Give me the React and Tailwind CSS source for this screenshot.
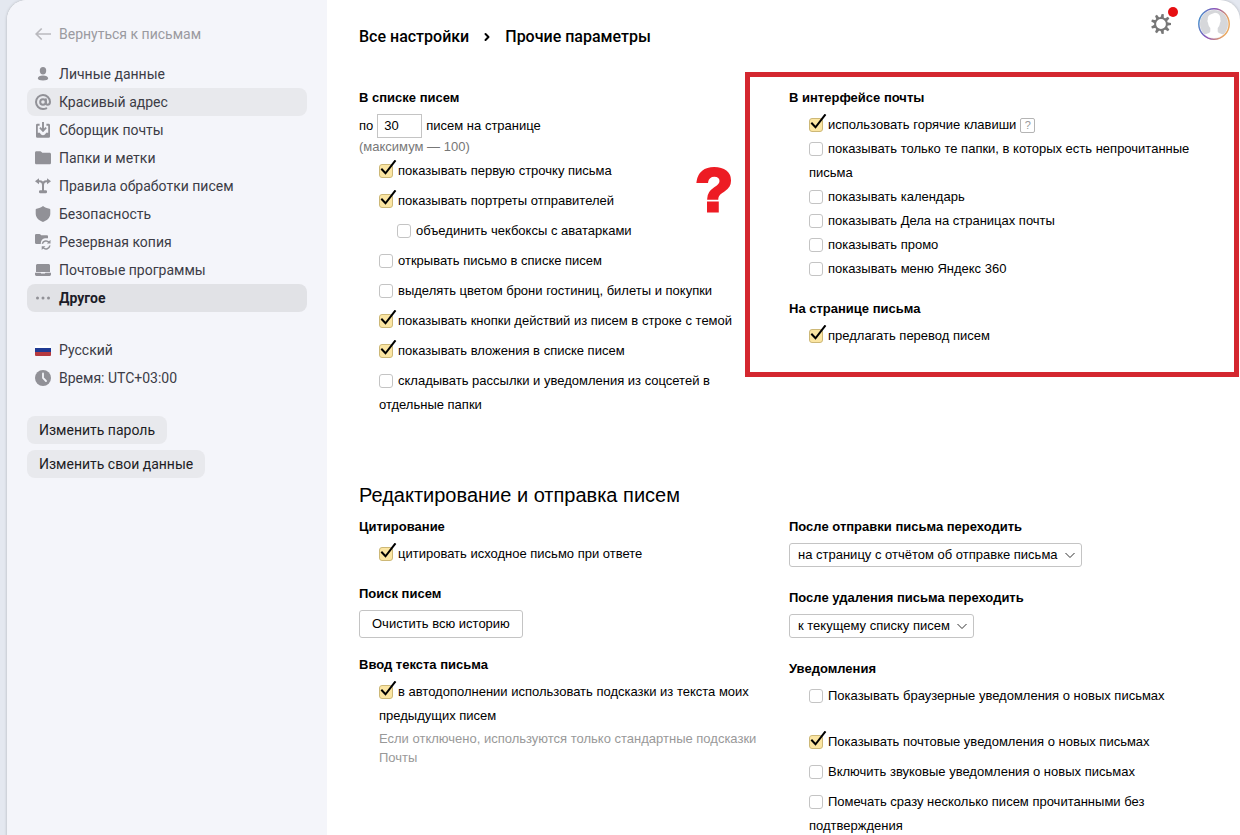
import { useState } from "react";
import { ChevronRight } from "lucide-react";

const BackIcon = () => (
  <svg viewBox="0 0 16 16" fill="none" stroke="#b9b9be" strokeWidth="1.7" className="size-4">
    <path d="M16 8H1.500M6.700 2.500 1.200 8l5.500 5.500" />
  </svg>
);

const PersonIcon = () => (
  <svg viewBox="0 0 16 16" fill="currentColor" className="size-4">
    <ellipse cx="8" cy="4.7" rx="3.2" ry="3.7" />
    <path d="M2.8 12.6C2.8 10.6 5 9.4 8 9.4s5.200 1.200 5.200 3.200c0 1.300-2.200 1.900-5.200 1.900s-5.200-.6-5.200-1.900z" />
  </svg>
);

const AtIcon = () => (
  <svg viewBox="0 0 16 16" fill="none" stroke="currentColor" strokeWidth="2" strokeLinecap="round" className="size-4">
    <circle cx="8" cy="8" r="2.800" />
    <path d="M10.900 5.200v3.600c0 1.200.7 1.900 1.700 1.900s2.400-.9 2.400-2.900A7 7 0 1 0 8 15c1.300 0 2.200-.2 3.200-.7" />
  </svg>
);

const CollectorIcon = () => (
  <svg viewBox="0 0 16 16" className="size-4">
    <path
      d="M4.600 1.800H2.400A1.400 1.400 0 0 0 1 3.200v11.200A1.400 1.400 0 0 0 2.400 15.800h11.200a1.400 1.400 0 0 0 1.400-1.400V3.200a1.400 1.400 0 0 0-1.400-1.400h-2.200v2h1.800v7h-2.200c-.4 1.500-1.500 2.400-3 2.400s-2.600-.9-3-2.400H2.800v-7h1.800z"
      fill="currentColor"
    />
    <path d="M8 0v8.500M4.900 5.700 8 8.800l3.100-3.100" fill="none" stroke="currentColor" strokeWidth="1.900" />
  </svg>
);

const FolderIcon = () => (
  <svg viewBox="0 0 16 16" fill="currentColor" className="size-4">
    <path d="M0 2.800C0 2 .6 1.300 1.300 1.300h4c.5 0 .9.2 1.200.6l.8.900h7.200c.8 0 1.500.6 1.500 1.400v8.700c0 .8-.7 1.400-1.500 1.400h-13C.7 14.300 0 13.700 0 12.900z" />
  </svg>
);

const RulesIcon = () => (
  <svg viewBox="0 0 16 16" fill="currentColor" className="size-4">
    <path d="M3 3.200h1.500C6.500 3.200 8 5 8 7.500 8 5 9.500 3.200 11.500 3.200H13M8 7v6" fill="none" stroke="currentColor" strokeWidth="2" />
    <path d="M4 .2v6L0 3.200zM12 .2v6l4-3z" />
    <rect x="4" y="12.200" width="8" height="3" rx="1.200" />
  </svg>
);

const ShieldIcon = () => (
  <svg viewBox="0 0 16 16" fill="currentColor" className="size-4">
    <path d="M8 0c1.800 1.400 4 2.300 6.400 2.700.6.100.9.500.9 1.100v3.700c0 4-3 7-7.300 8.500C3.700 14.500.7 11.500.7 7.500V3.800c0-.6.3-1 .9-1.100C4 2.300 6.200 1.400 8 0z" />
  </svg>
);

const BackupIcon = () => (
  <svg viewBox="0 0 16 16" className="size-4">
    <path
      d="M0 1.300C0 .6.500 0 1.200 0h3.200c.5 0 .8.200 1.100.5l.7.800h5.600c.700 0 1.200.5 1.200 1.200v1.700H10c-2.500.4-4 2-4.200 4.700v1H1.200C.5 9.900 0 9.400 0 8.700z"
      fill="currentColor"
    />
    <path d="M7.300 9.700A4 4 0 0 1 14 8.200M14.900 11.500a4 4 0 0 1-6.700 2.300" fill="none" stroke="currentColor" strokeWidth="1.500" />
    <path d="M15.500 5.800v3.700h-3.700zM6.700 15.900v-3.700h3.700z" fill="currentColor" />
  </svg>
);

const LaptopIcon = () => (
  <svg viewBox="0 0 16 16" fill="currentColor" className="size-4">
    <path d="M1 3.500C1 2.700 1.700 2 2.500 2h11c.8 0 1.500.7 1.500 1.500V9.900H1zM0 10.700h5.600c.3.600.6.900 1.200.9h2.400c.6 0 .9-.3 1.200-.9H16v1.900c0 .8-.6 1.400-1.400 1.400H1.400C.6 14 0 13.400 0 12.600z" />
  </svg>
);

const DotsIcon = () => (
  <svg viewBox="0 0 16 16" fill="currentColor" className="size-4">
    <circle cx="2.500" cy="8" r="1.500" />
    <circle cx="8" cy="8" r="1.500" />
    <circle cx="13.500" cy="8" r="1.500" />
  </svg>
);

const FlagIcon = () => (
  <svg viewBox="0 0 16 16" className="size-4">
    <path d="M0 3h16v3H0z" fill="#fff" />
    <path d="M0 6h16v4H0z" fill="#1f3a93" />
    <path d="M0 10h16v3a1 1 0 0 1-1 1H1a1 1 0 0 1-1-1z" fill="#b5393f" />
  </svg>
);

const ClockIcon = () => (
  <svg viewBox="0 0 16 16" className="size-4">
    <circle cx="8" cy="8" r="8" fill="currentColor" />
    <path d="M8 3.500V8l3 3" fill="none" stroke="#f4f5fa" strokeWidth="1.800" strokeLinecap="round" />
  </svg>
);

const teeth = [0, 40, 80, 120, 160, 200, 240, 280, 320];

const GearIcon = () => (
  <svg viewBox="0 0 20 20" fill="#777" className="size-5">
    <circle cx="10" cy="10" r="5.900" fill="none" stroke="#777" strokeWidth="2" />
    {teeth.map((angle) => (
      <path key={angle} d="M8.300 4 8.900 0h2.200l.6 4z" transform={`rotate(${angle + 10} 10 10)`} />
    ))}
  </svg>
);

const AvatarIcon = () => (
  <svg viewBox="0 0 32 32" className="size-8">
    <defs>
      <linearGradient id="ring" x1="0" y1="0" x2="1" y2="0.300">
        <stop offset="0" stopColor="#3f9fd0" />
        <stop offset="0.500" stopColor="#8a4fb8" />
        <stop offset="1" stopColor="#eaa860" />
      </linearGradient>
      <clipPath id="face">
        <circle cx="16" cy="16" r="14" />
      </clipPath>
    </defs>
    <circle cx="16" cy="16" r="14" fill="#d6d7da" />
    <path
      clipPath="url(#face)"
      d="M13 6.200 17 4.800c3.600.2 5.700 3 5.300 6.700l.4 1.500-.8 2.300c-.3 2.200-1 3.500-2.200 4.700v3.500c.6 2.200 4.300 2 7 4L22 31H10l-5-3.500c2.700-2 6.700-1.800 7.300-4V20c-1.200-1.200-1.900-2.500-2.200-4.700L9.300 13l.5-1.500C9.500 9 10.500 7 13 6.200z"
      fill="#fff"
    />
    <circle cx="16" cy="16" r="15.200" fill="none" stroke="url(#ring)" strokeWidth="1.500" />
  </svg>
);

const menu = [
  { title: "Личные данные", icon: PersonIcon },
  { title: "Красивый адрес", icon: AtIcon, hovered: true },
  { title: "Сборщик почты", icon: CollectorIcon },
  { title: "Папки и метки", icon: FolderIcon },
  { title: "Правила обработки писем", icon: RulesIcon },
  { title: "Безопасность", icon: ShieldIcon },
  { title: "Резервная копия", icon: BackupIcon },
  { title: "Почтовые программы", icon: LaptopIcon },
  { title: "Другое", icon: DotsIcon, active: true },
];

const MenuItem = ({ title, icon: Icon, hovered, active }) => (
  <a
    href="#"
    className={`flex h-7 items-center gap-2 rounded-lg px-2 hover:bg-[#e8e9ed] ${
      active ? "bg-[#e1e2e6] font-bold text-[#1c1c28]" : ""
    } ${hovered ? "bg-[#e8e9ed]" : ""}`}
  >
    <span className="text-[#919197]">
      <Icon />
    </span>
    {title}
  </a>
);

const Sidebar = () => (
  <aside className="w-80 shrink-0 bg-[#f4f5fa] px-5 pt-5 font-['Roboto',sans-serif] text-sm text-[#3c3c46]">
    <a href="#" className="flex h-7 items-center gap-2 px-2 text-[#9a9aa0]">
      <BackIcon />
      Вернуться к письмам
    </a>
    <nav className="mt-3">
      {menu.map((item) => (
        <MenuItem key={item.title} {...item} />
      ))}
    </nav>
    <div className="mt-6">
      <MenuItem title="Русский" icon={FlagIcon} />
      <MenuItem title="Время: UTC+03:00" icon={ClockIcon} />
    </div>
    <div className="mt-6 flex flex-col items-start gap-1.5 text-[#1c1c24]">
      <button className="h-7 rounded-lg bg-[#e8e9ed] px-3">Изменить пароль</button>
      <button className="h-7 rounded-lg bg-[#e8e9ed] px-3">Изменить свои данные</button>
    </div>
  </aside>
);

const Check = ({ label, checked = false, className = "" }) => {
  const [value, setValue] = useState(checked);

  return (
    <label className={`block leading-6 ${className}`}>
      <span className="relative mr-[5px] inline-block size-3.5 align-[-3px]">
        <input
          type="checkbox"
          checked={value}
          onChange={() => setValue(!value)}
          className="block size-3.5 appearance-none rounded-[3px] border border-[#c4c4c4] bg-white checked:border-[#cdb877] checked:bg-[#fbe5a2]"
        />
        {value && (
          <svg
            viewBox="0 0 18 18"
            fill="none"
            stroke="#000"
            strokeWidth="2"
            className="pointer-events-none absolute -top-1 left-0 size-[18px]"
          >
            <path d="M2.300 8.800 6.500 13.300 16.500 .3" />
          </svg>
        )}
      </span>
      {label}
    </label>
  );
};

const Title = ({ children, className = "" }) => (
  <h3 className={`font-bold leading-5 ${className}`}>{children}</h3>
);

const Select = ({ id, label, option }) => (
  <div>
    <label htmlFor={id} className="block font-bold leading-5">
      {label}
    </label>
    <div className="relative mt-1.5 inline-block align-top">
      <select id={id} className="block h-6 appearance-none rounded-[3px] border border-[#c4c4c4] bg-white pr-[23px] pl-2">
        <option>{option}</option>
      </select>
      <svg
        viewBox="0 0 12 12"
        fill="none"
        stroke="#333"
        className="pointer-events-none absolute top-1.5 right-1.5 size-3"
      >
        <path d="M1.500 4 6 8.500 10.500 4" />
      </svg>
    </div>
  </div>
);

const ListSettings = () => (
  <section className="relative pt-4">
    <Title>В списке писем</Title>
    <div className="mt-1.5 flex items-center gap-1 leading-6">
      <label htmlFor="per-page">по</label>
      <input id="per-page" defaultValue="30" className="h-6 w-[45px] border border-[#c4c4c4] px-1.5" />
      <span>писем на странице</span>
    </div>
    <p className="leading-[18px] text-[#777]">(максимум — 100)</p>
    <div className="mt-[3px] flex flex-col gap-1.5 pl-5">
      <Check label="показывать первую строчку письма" checked />
      <Check label="показывать портреты отправителей" checked />
      <Check label="объединить чекбоксы с аватарками" className="pl-[18px]" />
      <Check label="открывать письмо в списке писем" />
      <Check label="выделять цветом брони гостиниц, билеты и покупки" />
      <Check label="показывать кнопки действий из писем в строке с темой" checked />
      <Check label="показывать вложения в списке писем" checked />
      <Check label="складывать рассылки и уведомления из соцсетей в отдельные папки" />
    </div>
    <span className="absolute top-[84px] right-3 text-[62px] leading-[68px] font-bold text-[#ed1c24] [-webkit-text-stroke:3px_#ed1c24]">
      ?
    </span>
  </section>
);

const InterfaceSettings = () => (
  <section className="mr-px border-[5px] border-[#d4272f] pt-[11px] pr-8 pb-6 pl-[39px]">
    <Title>В интерфейсе почты</Title>
    <div className="mt-[5px] pl-5">
      <div className="flex items-center gap-1">
        <Check label="использовать горячие клавиши" checked />
        <button className="flex size-[15px] items-center justify-center rounded-[2px] border border-[#b4b4b4] text-[11px] leading-3 text-[#999]">
          ?
        </button>
      </div>
      <Check label="показывать только те папки, в которых есть непрочитанные письма" />
      <Check label="показывать календарь" />
      <Check label="показывать Дела на страницах почты" />
      <Check label="показывать промо" />
      <Check label="показывать меню Яндекс 360" />
    </div>
    <Title className="mt-[18px]">На странице письма</Title>
    <Check label="предлагать перевод писем" checked className="mt-[5px] pl-5" />
  </section>
);

export default function App() {
  return (
    <div className="min-h-screen bg-[#e4e8f0] pl-[7px]">
      <div className="flex min-h-screen overflow-hidden rounded-t-[20px] bg-white shadow-[0_0_3px_rgba(0,0,0,0.25)]">
        <Sidebar />
        <main className="min-w-0 flex-1 pl-8 font-['Liberation_Sans',Arial,sans-serif] text-[13px] text-black">
          <header className="flex h-[72px] items-start justify-between pt-2 pr-2.5">
            <nav className="flex items-center gap-3 pt-[17px] font-['Roboto',sans-serif] text-base leading-6 font-medium">
              <a href="#">Все настройки</a>
              <ChevronRight className="size-3" strokeWidth={4} />
              <span>Прочие параметры</span>
            </nav>
            <div className="flex items-center gap-[27px]">
              <button className="relative" aria-label="Настройки">
                <GearIcon />
                <span className="absolute -top-[7px] -right-[7px] size-2.5 rounded-full bg-[#e60f12]" />
              </button>
              <button aria-label="Профиль">
                <AvatarIcon />
              </button>
            </div>
          </header>

          <div className="grid grid-cols-[386px_1fr] items-start">
            <ListSettings />
            <InterfaceSettings />
          </div>

          <h2 className="mt-16 text-xl leading-7">Редактирование и отправка писем</h2>
          <div className="mt-2 grid grid-cols-[430px_1fr] items-start">
            <section>
              <Title>Цитирование</Title>
              <Check label="цитировать исходное письмо при ответе" checked className="mt-[5px] pl-5" />
              <Title className="mt-[18px]">Поиск писем</Title>
              <button className="mt-1.5 block h-7 rounded-[3px] border border-[#c4c4c4] px-3">
                Очистить всю историю
              </button>
              <Title className="mt-[17px]">Ввод текста письма</Title>
              <div className="mt-[5px] pr-7 pl-5">
                <Check label="в автодополнении использовать подсказки из текста моих предыдущих писем" checked />
                <p className="mt-px leading-[19px] text-[#999]">
                  Если отключено, используются только стандартные подсказки Почты
                </p>
              </div>
            </section>

            <section>
              <div className="flex flex-col gap-[21px]">
                <Select
                  id="after-send"
                  label="После отправки письма переходить"
                  option="на страницу с отчётом об отправке письма"
                />
                <Select id="after-delete" label="После удаления письма переходить" option="к текущему списку писем" />
              </div>
              <Title className="mt-[21px]">Уведомления</Title>
              <div className="mt-[5px] flex flex-col gap-1.5 pr-16 pl-5">
                <Check label="Показывать браузерные уведомления о новых письмах" className="mb-4" />
                <Check label="Показывать почтовые уведомления о новых письмах" checked />
                <Check label="Включить звуковые уведомления о новых письмах" />
                <Check label="Помечать сразу несколько писем прочитанными без подтверждения" />
              </div>
            </section>
          </div>
        </main>
      </div>
    </div>
  );
}
